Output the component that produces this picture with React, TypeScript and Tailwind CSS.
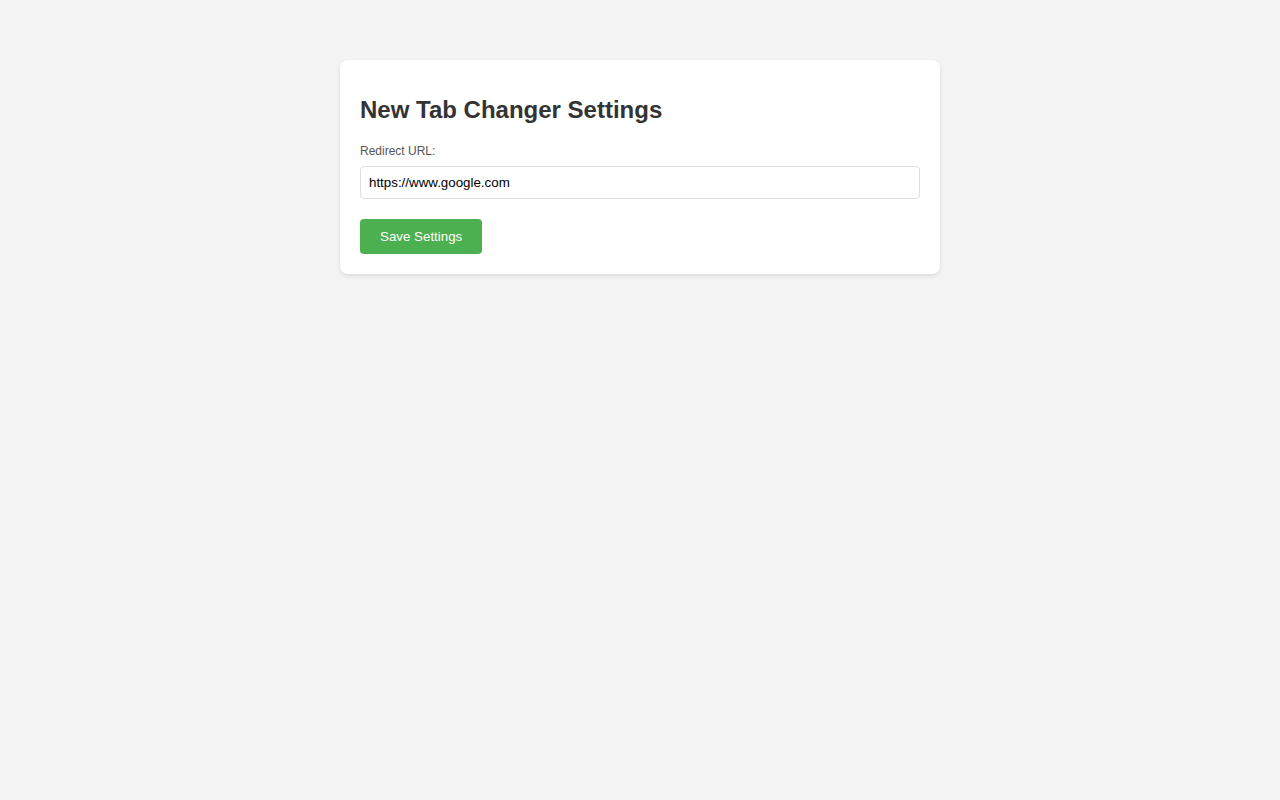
export default function App() {
  return (
    <div className="min-h-screen bg-[#f4f4f4] pt-[60px] font-['Liberation_Sans',Arial,sans-serif]">
      <div className="mx-auto w-[600px] rounded-lg bg-white p-5 shadow-[0_2px_5px_rgba(0,0,0,0.1)]">
        <h1 className="mt-4 mb-5 text-[24px] font-bold leading-[28px] text-[#333]">
          New Tab Changer Settings
        </h1>
        <label className="block text-[12px] leading-[14px] text-[#555]">Redirect URL:</label>
        <input
          type="text"
          defaultValue="https://www.google.com"
          className="mt-2 block h-[33px] w-full rounded border border-[#ddd] px-2 text-[13.33px] text-black outline-none"
        />
        <button className="mt-5 h-[35px] rounded bg-[#4caf50] px-5 text-[13.33px] text-white">
          Save Settings
        </button>
      </div>
    </div>
  );
}
